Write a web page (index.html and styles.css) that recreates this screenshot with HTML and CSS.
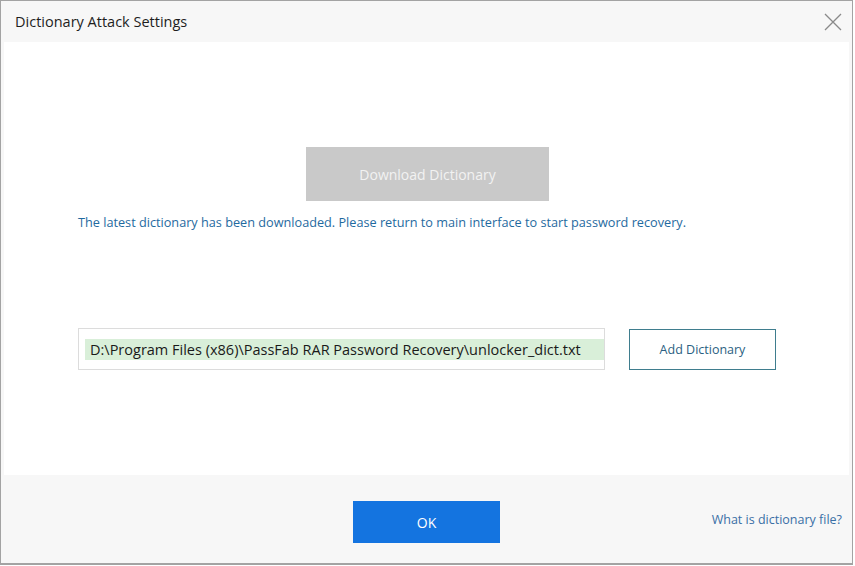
FILE: index.html
```html
<!DOCTYPE html>
<html lang="en">
<head>
    <meta charset="UTF-8">
    <title>Dictionary Attack Settings</title>
    <link rel="stylesheet" href="styles.css">
</head>
<body>
    <div class="window">
        <div class="titlebar">
            <span class="title">Dictionary Attack Settings</span>
            <svg class="close" width="18" height="18" viewBox="0 0 18 18">
                <path d="M1 1 L17 17 M17 1 L1 17" stroke="#8a8a8a" stroke-width="1.3" fill="none"/>
            </svg>
        </div>
        <div class="content">
            <button class="btn-download" disabled>Download Dictionary</button>
            <p class="message">The latest dictionary has been downloaded. Please return to main interface to start password recovery.</p>
            <div class="dict-row">
                <div class="path-box">
                    <span class="path">D:\Program Files (x86)\PassFab RAR Password Recovery\unlocker_dict.txt</span>
                </div>
                <button class="btn-add">Add Dictionary</button>
            </div>
        </div>
        <div class="footer">
            <span></span>
            <button class="btn-ok">OK</button>
            <a class="help" href="#">What is dictionary file?</a>
        </div>
    </div>
</body>
</html>
```

FILE: styles.css
```css
body {
    margin: 0;
    padding: 0;
    font-family: "Open Sans", "Noto Sans", sans-serif;
    background: #ffffff;
}

.window {
    width: 853px;
    height: 565px;
    box-sizing: border-box;
    border: 1px solid #a3a3a3;
    border-bottom-width: 2px;
    background: #f7f7f7;
    display: flex;
    flex-direction: column;
}

.titlebar {
    height: 41px;
    display: flex;
    align-items: center;
    justify-content: space-between;
    padding: 0 10px 0 14px;
}

.title {
    font-size: 14.5px;
    color: #1e1e1e;
}

.content {
    flex: 1;
    background: #ffffff;
    margin: 0 3px;
    padding: 105px 0 0 74px;
}

.btn-download {
    display: block;
    margin: 0 auto;
    position: relative;
    left: -36px;
    width: 243px;
    height: 54px;
    border: none;
    background: #c9c9c9;
    color: #f2f2f2;
    font-family: "Open Sans", sans-serif;
    font-size: 14px;
}

.message {
    margin: 13px 0 0;
    font-size: 12.7px;
    line-height: 17px;
    color: #1f6aa0;
}

.dict-row {
    display: flex;
    align-items: center;
    gap: 24px;
    margin-top: 97px;
}

.path-box {
    width: 527px;
    height: 42px;
    box-sizing: border-box;
    border: 1px solid #dcdcdc;
    display: flex;
    align-items: center;
    padding-left: 6px;
}

.path {
    flex: 1;
    background: #d9efd9;
    padding: 1px 0 1px 5px;
    font-size: 14.5px;
    color: #1a1a1a;
}

.btn-add {
    width: 147px;
    height: 41px;
    background: #ffffff;
    border: 1px solid #3f7d8e;
    color: #2b5f82;
    font-family: "Open Sans", sans-serif;
    font-size: 12.5px;
}

.footer {
    height: 88px;
    box-sizing: border-box;
    padding-top: 6px;
    display: grid;
    grid-template-columns: 1fr auto 1fr;
    align-items: center;
}

.btn-ok {
    width: 147px;
    height: 42px;
    border: none;
    background: #1474e0;
    color: #ffffff;
    font-family: "Open Sans", sans-serif;
    font-size: 14px;
}

.help {
    justify-self: end;
    margin-right: 10px;
    margin-bottom: 6px;
    font-size: 12.5px;
    color: #3a6fa6;
    text-decoration: none;
}
```
